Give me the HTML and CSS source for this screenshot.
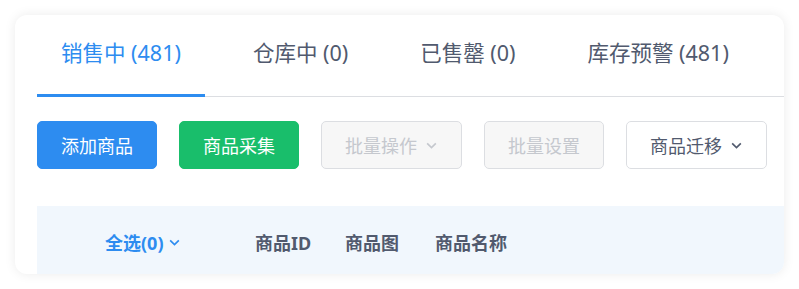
FILE: index.html
```html
<!DOCTYPE html>
<html lang="zh-CN">
<head>
    <meta charset="UTF-8">
    <meta name="viewport" content="width=device-width, initial-scale=1.0">
    <title>商品管理</title>
    <link rel="stylesheet" href="styles.css">
</head>
<body>
    <div class="card">
        <div class="tabs">
            <div class="tab active">销售中 (481)</div>
            <div class="tab">仓库中 (0)</div>
            <div class="tab">已售罄 (0)</div>
            <div class="tab">库存预警 (481)</div>
        </div>

        <div class="toolbar">
            <button class="btn btn-primary">添加商品</button>
            <button class="btn btn-success">商品采集</button>
            <button class="btn btn-disabled">批量操作
                <svg class="chevron" viewBox="0 0 12 12"><polyline points="2,4 6,8 10,4"/></svg>
            </button>
            <button class="btn btn-disabled">批量设置</button>
            <button class="btn btn-default">商品迁移
                <svg class="chevron" viewBox="0 0 12 12"><polyline points="2,4 6,8 10,4"/></svg>
            </button>
        </div>

        <div class="table-head">
            <div class="col col-select">全选(0)
                <svg class="chevron" viewBox="0 0 12 12"><polyline points="2,4 6,8 10,4"/></svg>
            </div>
            <div class="col col-id">商品ID</div>
            <div class="col col-img">商品图</div>
            <div class="col col-name">商品名称</div>
        </div>
    </div>
</body>
</html>
```

FILE: styles.css
```css
* {
    margin: 0;
    padding: 0;
    box-sizing: border-box;
}

body {
    background-color: #fff;
    color: #515a6e;
    font-family: "Noto Sans", "Noto Sans CJK SC", sans-serif;
    padding: 15px;
}

.card {
    width: 769px;
    height: 259px;
    background-color: #fff;
    border-radius: 12px;
    box-shadow: 0 0 12px rgba(0, 0, 0, 0.08);
    padding-left: 22px;
    overflow: hidden;
}

/* tabs */
.tabs {
    display: flex;
    gap: 24px;
    border-bottom: 1px solid #dcdee2;
    width: 900px;
}

.tab {
    font-size: 21.5px;
    line-height: 24px;
    padding: 26px 24px 29px;
    margin-bottom: -1px;
    border-bottom: 3px solid transparent;
    white-space: pre;
}

.tab.active {
    color: #2d8cf0;
    border-bottom-color: #2d8cf0;
}

/* buttons */
.toolbar {
    display: flex;
    gap: 22px;
    margin-top: 24px;
}

.btn {
    display: flex;
    align-items: center;
    height: 48px;
    padding: 0 23px;
    border: 1px solid #dcdee2;
    border-radius: 5px;
    font-family: inherit;
    font-size: 18px;
    background: #fff;
    color: #515a6e;
    white-space: nowrap;
}

.btn-primary {
    background-color: #2d8cf0;
    border-color: #2d8cf0;
    color: #fff;
}

.btn-success {
    background-color: #19be6b;
    border-color: #19be6b;
    color: #fff;
}

.btn-disabled {
    background-color: #f7f7f7;
    color: #c5c8ce;
}

.chevron {
    width: 13px;
    height: 13px;
    margin-left: 8px;
    fill: none;
    stroke: currentColor;
    stroke-width: 1.5;
}

/* table header */
.table-head {
    display: flex;
    align-items: center;
    height: 72px;
    margin-top: 37px;
    width: 900px;
    background-color: #f1f7fd;
    font-size: 18px;
    font-weight: bold;
}

.col {
    display: flex;
    align-items: center;
    white-space: nowrap;
}

.col-select {
    width: 218px;
    padding-left: 68px;
    color: #2d8cf0;
}

.col-select .chevron {
    margin-left: 4px;
}

.col-id,
.col-img {
    width: 90px;
}
```
